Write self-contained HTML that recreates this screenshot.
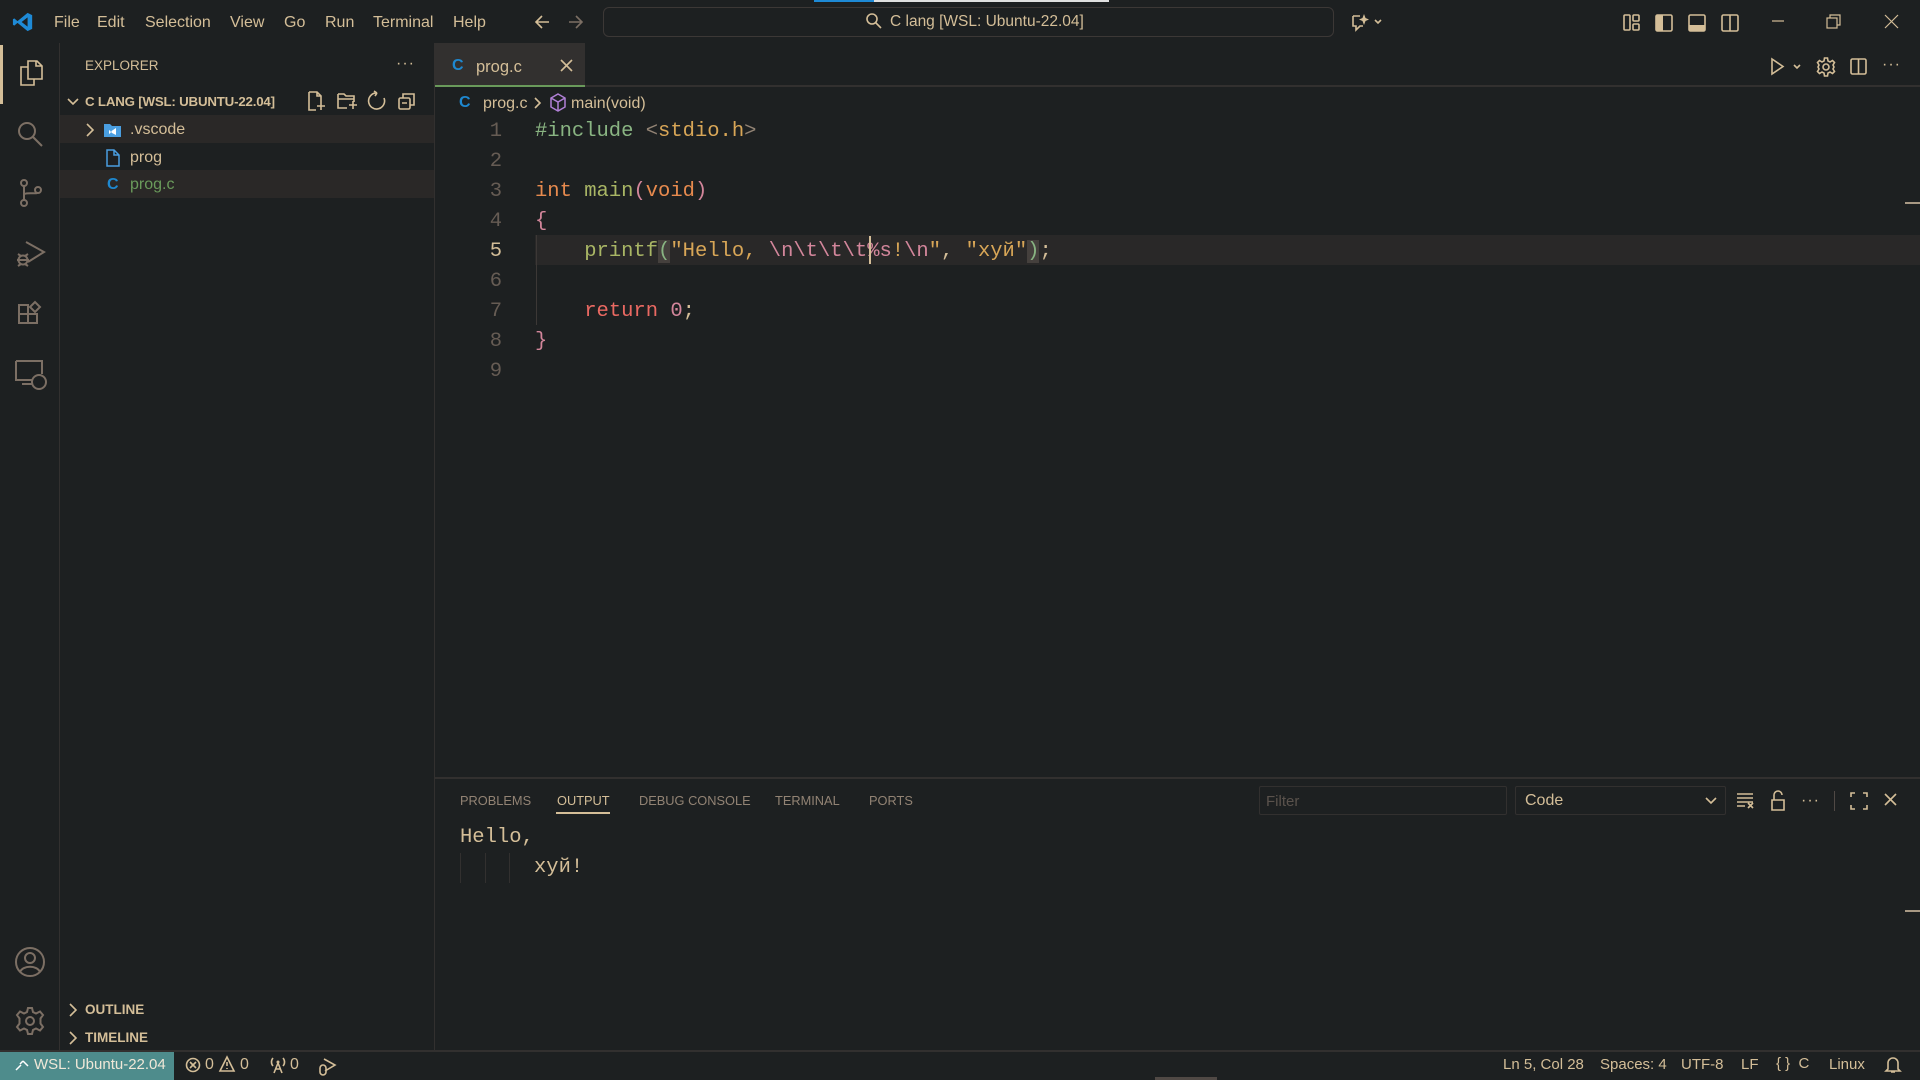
<!DOCTYPE html>
<html><head><meta charset="utf-8"><style>
*{margin:0;padding:0;box-sizing:border-box}
body{width:1920px;height:1080px;background:#1d2021;color:#d4be98;font-family:"Liberation Sans","Noto Sans CJK JP",sans-serif;font-size:16px;position:relative;overflow:hidden}
.a{position:absolute;white-space:nowrap}
.mono{font-family:"Liberation Mono","DejaVu Sans Mono",monospace;font-size:20.5px}
svg{position:absolute;overflow:visible}
.ic{fill:none;stroke:#d4be98;stroke-width:1.6}
.ig{fill:none;stroke:#7c6f64;stroke-width:2}
.ln{position:absolute;left:440px;width:62px;text-align:right;color:#665c54;height:30px;line-height:30px}
.cl{position:absolute;left:535px;height:30px;line-height:30px;white-space:pre}
.g{color:#a9b665}.o{color:#e78a4e}.p{color:#d3869b}.y{color:#d8a657}.r{color:#ea6962}.q{color:#89b482}.f{color:#d4be98}.gr{color:#928374}
</style></head><body>
<!-- title bar -->
<div class="a" style="left:0;top:0;width:1920px;height:43px;background:#1d2021"></div>
<svg style="left:12px;top:11px" width="22" height="22" viewBox="0 0 24 24"><path d="M17 2 L22 4.5 V19.5 L17 22 L6 13 L2.5 16 L1 15 V9 L2.5 8 L6 11 Z M17 7 L10.5 12 L17 17 Z" fill="#1e8ad6"/></svg>
<div class="a" style="left:54px;top:14px;font-size:16px">File</div>
<div class="a" style="left:97px;top:14px">Edit</div>
<div class="a" style="left:145px;top:14px">Selection</div>
<div class="a" style="left:230px;top:14px">View</div>
<div class="a" style="left:284px;top:14px">Go</div>
<div class="a" style="left:325px;top:14px">Run</div>
<div class="a" style="left:373px;top:14px">Terminal</div>
<div class="a" style="left:453px;top:14px">Help</div>
<svg style="left:534px;top:14px" width="16" height="16"><path class="ic" d="M15 8H2M8 2L2 8L8 14"/></svg>
<svg style="left:568px;top:14px" width="16" height="16"><path d="M1 8H14M8 2L14 8L8 14" fill="none" stroke="#7c6f64" stroke-width="1.6"/></svg>
<div class="a" style="left:603px;top:7px;width:731px;height:30px;border:1px solid #3c3836;border-radius:6px;background:#1d2021"></div>
<div class="a" style="left:814px;top:0;width:295px;height:2px;background:#e0e0e0"></div>
<div class="a" style="left:814px;top:0;width:60px;height:2px;background:#1e8ad6"></div>
<svg style="left:866px;top:13px" width="16" height="16"><circle cx="6" cy="6" r="5" class="ic"/><path class="ic" d="M10 10L15 15"/></svg>
<div class="a" style="left:890px;top:13px;font-size:15.5px">C lang [WSL: Ubuntu-22.04]</div>
<svg style="left:1351px;top:12px" width="40" height="20"><path class="ic" d="M2 4V14H5V18L9 14H12M2 4H9" /><path d="M13 2L14.5 6L18 7.5L14.5 9L13 13L11.5 9L8 7.5L11.5 6Z" fill="#d4be98"/><path class="ic" d="M24 8L27 11L30 8"/></svg>
<svg style="left:1623px;top:13px" width="20" height="20"><rect x="1" y="2" width="6" height="15" rx="1" class="ic"/><rect x="10" y="2" width="6" height="6" rx="1" class="ic"/><rect x="10" y="11" width="6" height="6" rx="1" class="ic"/></svg>
<svg style="left:1655px;top:13px" width="20" height="20"><rect x="1" y="2" width="16" height="16" rx="1.5" class="ic"/><rect x="1" y="2" width="7" height="16" fill="#d4be98"/></svg>
<svg style="left:1688px;top:13px" width="20" height="20"><rect x="1" y="2" width="16" height="16" rx="1.5" class="ic"/><rect x="1" y="12" width="16" height="6" fill="#d4be98"/></svg>
<svg style="left:1721px;top:13px" width="20" height="20"><rect x="1" y="2" width="16" height="16" rx="1.5" class="ic"/><path class="ic" d="M9 2V18"/></svg>
<svg style="left:1771px;top:15px" width="16" height="16"><path d="M1 6H13" stroke="#d4be98" stroke-width="1.2"/></svg>
<svg style="left:1826px;top:14px" width="16" height="16"><rect x="1" y="4" width="10" height="10" fill="none" stroke="#d4be98" stroke-width="1.2"/><path d="M4 4V1H14V11H11" fill="none" stroke="#d4be98" stroke-width="1.2"/></svg>
<svg style="left:1884px;top:14px" width="16" height="16"><path d="M1 1L14 14M14 1L1 14" stroke="#d4be98" stroke-width="1.2"/></svg>

<!-- activity bar -->
<div class="a" style="left:0;top:45px;width:3px;height:59px;background:#d4be98"></div>
<svg style="left:16px;top:58px" width="30" height="32"><path class="ic" d="M12 3H21L26 8V21H12Z M20 3V8H26" stroke-width="2"/><path class="ic" d="M12 9H5V27H18V21" stroke-width="2"/></svg>
<svg style="left:16px;top:120px" width="30" height="30" ><circle cx="11" cy="11" r="8" class="ig"/><path class="ig" d="M17 17L26 26"/></svg>
<svg style="left:16px;top:178px" width="30" height="32"><circle cx="8" cy="5" r="3" class="ig"/><circle cx="8" cy="25" r="3" class="ig"/><circle cx="22" cy="12" r="3" class="ig"/><path class="ig" d="M8 8V22M8 17C8 14 20 16 21 15"/></svg>
<svg style="left:14px;top:236px" width="34" height="34"><path class="ig" d="M12 6L30 16L14 26"/><circle cx="9" cy="24" r="4.5" class="ig"/><path class="ig" d="M3 24H15M4 18L7 20M14 18L11 20M4 30L7 28M14 30L11 28"/></svg>
<svg style="left:16px;top:298px" width="30" height="30"><path class="ig" d="M3 7H12V25H3ZM3 16H21V25H12M14 9L19 4L24 9L19 14Z"/></svg>
<svg style="left:14px;top:358px" width="34" height="34"><path class="ig" d="M2 3H28V16M18 22H2V3M8 26H18"/><circle cx="25" cy="24" r="7" class="ig"/></svg>
<svg style="left:14px;top:946px" width="32" height="32"><circle cx="16" cy="16" r="14" class="ig"/><circle cx="16" cy="12" r="5" class="ig"/><path class="ig" d="M6 26C9 19 23 19 26 26"/></svg>
<svg style="left:15px;top:1006px" width="30" height="30"><circle cx="15" cy="15" r="4" class="ig"/><path class="ig" d="M13 2H17L18 6L21 7.5L25 5.5L28 9L25.5 12.5V17.5L28 21L25 24.5L21 22.5L18 24L17 28H13L12 24L9 22.5L5 24.5L2 21L4.5 17.5V12.5L2 9L5 5.5L9 7.5L12 6Z"/></svg>
<div class="a" style="left:59px;top:43px;width:1px;height:1008px;background:#32302f"></div>

<!-- sidebar -->
<div class="a" style="left:85px;top:58px;font-size:13.5px">EXPLORER</div>
<div class="a" style="left:396px;top:55px;font-size:16px;letter-spacing:1px">···</div>
<svg style="left:66px;top:95px" width="14" height="14"><path class="ic" d="M2 4L7 9L12 4"/></svg>
<div class="a" style="left:85px;top:94px;font-size:13.3px;font-weight:bold;letter-spacing:-0.2px">C LANG [WSL: UBUNTU-22.04]</div>
<svg style="left:306px;top:90px" width="20" height="22"><path class="ic" d="M3 2H11L15 6V12M3 2V20H10M11 2V6H15M11 16H19M15 12V20"/></svg>
<svg style="left:336px;top:90px" width="22" height="22"><path class="ic" d="M2 4H8L10 6H18V12M2 4V18H11M2 9H18M13 15H21M17 11V19"/></svg>
<svg style="left:367px;top:91px" width="20" height="20"><path class="ic" d="M10 2A8 8 0 1 0 17 7M10 2L7 0M10 2L8 5"/></svg>
<svg style="left:397px;top:91px" width="20" height="20"><rect x="2" y="7" width="11" height="11" rx="1.5" class="ic"/><path class="ic" d="M6 7V3H17V14H13M5 12H10"/></svg>
<div class="a" style="left:60px;top:115px;width:375px;height:28px;background:#2a2827"></div>
<div class="a" style="left:60px;top:170px;width:375px;height:28px;background:#2a2827"></div>
<svg style="left:84px;top:122px" width="12" height="16"><path class="ic" d="M3 2L9 8L3 14"/></svg>
<svg style="left:104px;top:122px" width="18" height="16"><path d="M0 2H6L8 4H17V15H0Z" fill="#4a9ee0"/><path d="M12 6L6 10L12 13Z M5 8L8 10L5 12" fill="#fff"/></svg>
<div class="a" style="left:130px;top:121px;font-size:16px">.vscode</div>
<svg style="left:105px;top:149px" width="16" height="18"><path d="M2 1H9L14 6V17H2Z M9 1V6H14" fill="none" stroke="#4a9ee0" stroke-width="1.5"/></svg>
<div class="a" style="left:130px;top:149px">prog</div>
<div class="a" style="left:107px;top:176px;color:#1e88d0;font-weight:bold;font-size:16px">C</div>
<div class="a" style="left:130px;top:176px;color:#6a9a5b">prog.c</div>
<svg style="left:67px;top:1002px" width="12" height="16"><path class="ic" d="M3 2L9 8L3 14"/></svg>
<div class="a" style="left:85px;top:1002px;font-size:13.5px;font-weight:bold">OUTLINE</div>
<svg style="left:67px;top:1030px" width="12" height="16"><path class="ic" d="M3 2L9 8L3 14"/></svg>
<div class="a" style="left:85px;top:1030px;font-size:13.5px;font-weight:bold">TIMELINE</div>
<div class="a" style="left:434px;top:43px;width:1px;height:1008px;background:#32302f"></div>

<!-- tabs -->
<div class="a" style="left:435px;top:43px;width:1485px;height:44px;background:#1d2021;border-bottom:2px solid #32302f"></div>
<div class="a" style="left:435px;top:43px;width:150px;height:44px;background:#32302f;border-bottom:2px solid #6a9a5b"></div>
<div class="a" style="left:452px;top:57px;color:#1e88d0;font-weight:bold">C</div>
<div class="a" style="left:476px;top:58px;font-size:16.5px">prog.c</div>
<svg style="left:560px;top:59px" width="14" height="14"><path d="M1 1L12 12M12 1L1 12" stroke="#d4be98" stroke-width="1.6"/></svg>
<svg style="left:1770px;top:58px" width="36" height="18"><path class="ic" d="M2 1L13 8.5L2 16Z"/><path class="ic" d="M24 7L27 10L30 7"/></svg>
<svg style="left:1816px;top:57px" width="20" height="20"><circle cx="10" cy="10" r="3" class="ic"/><path class="ic" d="M8.5 1H11.5L12 4L14 5L16.5 3.5L18.5 5.5L17 8L18 10L17 12L18.5 14.5L16.5 16.5L14 15L12 16L11.5 19H8.5L8 16L6 15L3.5 16.5L1.5 14.5L3 12L2 10L3 8L1.5 5.5L3.5 3.5L6 5L8 4Z"/></svg>
<svg style="left:1850px;top:58px" width="18" height="18"><rect x="1" y="1" width="15" height="15" rx="1.5" class="ic"/><path class="ic" d="M8.5 1V16"/></svg>
<div class="a" style="left:1882px;top:56px;font-size:16px;letter-spacing:1px">···</div>

<!-- breadcrumb -->
<div class="a" style="left:459px;top:94px;color:#1e88d0;font-weight:bold">C</div>
<div class="a" style="left:483px;top:95px">prog.c</div>
<svg style="left:533px;top:96px" width="10" height="14"><path class="ic" d="M2 2L7 7L2 12"/></svg>
<svg style="left:549px;top:93px" width="18" height="20"><path d="M9 1L16 5V14L9 18L2 14V5Z M2 5L9 9L16 5 M9 9V18" fill="none" stroke="#b180d7" stroke-width="1.5"/></svg>
<div class="a" style="left:571px;top:95px">main(void)</div>

<!-- editor -->
<div class="a" style="left:535px;top:235px;width:1385px;height:30px;background:#292828"></div>
<div class="a" style="left:536px;top:235px;width:1px;height:90px;background:#3c3836"></div>
<div class="a" style="left:1905px;top:202px;width:15px;height:2px;background:#a89984"></div>
<div class="mono">
<div class="ln" style="top:117px">1</div><div class="ln" style="top:147px">2</div><div class="ln" style="top:177px">3</div><div class="ln" style="top:207px">4</div><div class="ln" style="top:237px;color:#d4be98">5</div><div class="ln" style="top:267px">6</div><div class="ln" style="top:297px">7</div><div class="ln" style="top:327px">8</div><div class="ln" style="top:357px">9</div>
<div class="cl" style="top:117px"><span class="q">#include</span> <span class="gr">&lt;</span><span class="y">stdio.h</span><span class="gr">&gt;</span></div>
<div class="cl" style="top:177px"><span class="o">int</span> <span class="g">main</span><span class="p">(</span><span class="o">void</span><span class="p">)</span></div>
<div class="cl" style="top:207px"><span class="p">{</span></div>
<div class="cl" style="top:237px">    <span class="g">printf</span><span class="q" style="background:#45403d">(</span><span class="y">"Hello, </span><span class="p">\n\t\t\t</span><span class="p">%s</span><span class="y">!</span><span class="p">\n</span><span class="y">"</span><span class="f">, </span><span class="y">"хуй"</span><span class="q" style="background:#45403d">)</span><span class="f">;</span></div>
<div class="cl" style="top:297px">    <span class="r">return</span> <span class="p">0</span><span class="f">;</span></div>
<div class="cl" style="top:327px"><span class="p">}</span></div>
</div>
<div class="a" style="left:869px;top:236px;width:2px;height:28px;background:#d4be98"></div>

<!-- panel -->
<div class="a" style="left:435px;top:777px;width:1485px;height:2px;background:#32302f"></div>
<div class="a" style="left:460px;top:793px;font-size:12.8px;color:#928374">PROBLEMS</div>
<div class="a" style="left:557px;top:793px;font-size:12.8px">OUTPUT</div>
<div class="a" style="left:556px;top:812px;width:54px;height:2px;background:#d4be98"></div>
<div class="a" style="left:639px;top:793px;font-size:12.8px;color:#928374">DEBUG CONSOLE</div>
<div class="a" style="left:775px;top:793px;font-size:12.8px;color:#928374">TERMINAL</div>
<div class="a" style="left:869px;top:793px;font-size:12.8px;color:#928374">PORTS</div>
<div class="a" style="left:1259px;top:786px;width:248px;height:29px;border:1px solid #32302f;border-radius:2px"></div>
<div class="a" style="left:1266px;top:793px;font-size:15px;color:#5a524c">Filter</div>
<div class="a" style="left:1515px;top:786px;width:211px;height:29px;border:1px solid #32302f;border-radius:2px"></div>
<div class="a" style="left:1525px;top:792px;font-size:16px">Code</div>
<svg style="left:1704px;top:795px" width="14" height="12"><path class="ic" d="M2 3L7 8L12 3"/></svg>
<svg style="left:1736px;top:792px" width="20" height="18"><path class="ic" d="M1 2H17M1 6H17M1 10H17M1 14H9M12 11L17 16M17 11L12 16"/></svg>
<svg style="left:1770px;top:790px" width="16" height="22"><path class="ic" d="M4 10V5A4 4 0 0 1 12 5M2 10H14V20H2Z"/></svg>
<div class="a" style="left:1801px;top:792px;font-size:16px;letter-spacing:1px">···</div>
<div class="a" style="left:1834px;top:791px;width:1px;height:20px;background:#504945"></div>
<svg style="left:1850px;top:792px" width="18" height="18"><path class="ic" d="M1 5V1H5M13 1H17V5M17 13V17H13M5 17H1V13"/></svg>
<svg style="left:1884px;top:793px" width="14" height="14"><path d="M1 1L12 12M12 1L1 12" stroke="#d4be98" stroke-width="1.6"/></svg>
<div class="a mono" style="left:460px;top:823px;line-height:30px">Hello,</div>
<div class="a mono" style="left:534px;top:853px;line-height:30px">хуй!</div>
<div class="a" style="left:460px;top:853px;width:1px;height:30px;background:#32302f"></div>
<div class="a" style="left:485px;top:853px;width:1px;height:30px;background:#32302f"></div>
<div class="a" style="left:509px;top:853px;width:1px;height:30px;background:#32302f"></div>
<div class="a" style="left:1905px;top:910px;width:15px;height:2px;background:#a89984"></div>

<!-- status bar -->
<div class="a" style="left:0;top:1050px;width:1920px;height:30px;background:#1d2021;border-top:2px solid #32302f"></div>
<div class="a" style="left:0;top:1052px;width:174px;height:28px;background:#4e8c8c"></div>
<svg style="left:14px;top:1058px" width="16" height="16"><path d="M2 12L7 7M9 3L14 8M9 3L6 6" fill="none" stroke="#fff" stroke-width="1.5"/></svg>
<div class="a" style="left:34px;top:1056px;font-size:15px;color:#f0e8d8">WSL: Ubuntu-22.04</div>
<svg style="left:185px;top:1057px" width="18" height="18"><circle cx="8" cy="8" r="6.5" class="ic"/><path class="ic" d="M5 5L11 11M11 5L5 11"/></svg>
<div class="a" style="left:205px;top:1056px">0</div>
<svg style="left:219px;top:1056px" width="18" height="18"><path class="ic" d="M8 1L15 15H1Z M8 6V10 M8 12V13"/></svg>
<div class="a" style="left:240px;top:1056px">0</div>
<svg style="left:268px;top:1055px" width="20" height="20"><path class="ic" d="M10 8L6 18M10 8L14 18M7 14H13M5 3A6 6 0 0 0 5 11M15 3A6 6 0 0 1 15 11"/><circle cx="10" cy="7" r="1.5" fill="#d4be98"/></svg>
<div class="a" style="left:290px;top:1056px">0</div>
<svg style="left:317px;top:1056px" width="20" height="20"><path class="ic" d="M7 3L18 9L8 15M3 12A3 3 0 0 1 9 12V16A3 3 0 0 1 3 16Z"/></svg>
<div class="a" style="left:1503px;top:1056px;font-size:15px">Ln 5, Col 28</div>
<div class="a" style="left:1600px;top:1056px;font-size:15px">Spaces: 4</div>
<div class="a" style="left:1681px;top:1056px;font-size:15px">UTF-8</div>
<div class="a" style="left:1741px;top:1056px;font-size:15px">LF</div>
<div class="a" style="left:1776px;top:1055px;font-size:15px">{ }&nbsp; C</div>
<div class="a" style="left:1829px;top:1056px;font-size:15px">Linux</div>
<svg style="left:1885px;top:1056px" width="16" height="18"><path class="ic" d="M3 13V7A5 5 0 0 1 13 7V13L15 15H1Z M6 16H10"/></svg>
<div class="a" style="left:1155px;top:1077px;width:62px;height:3px;background:#504945"></div>
</body></html>
